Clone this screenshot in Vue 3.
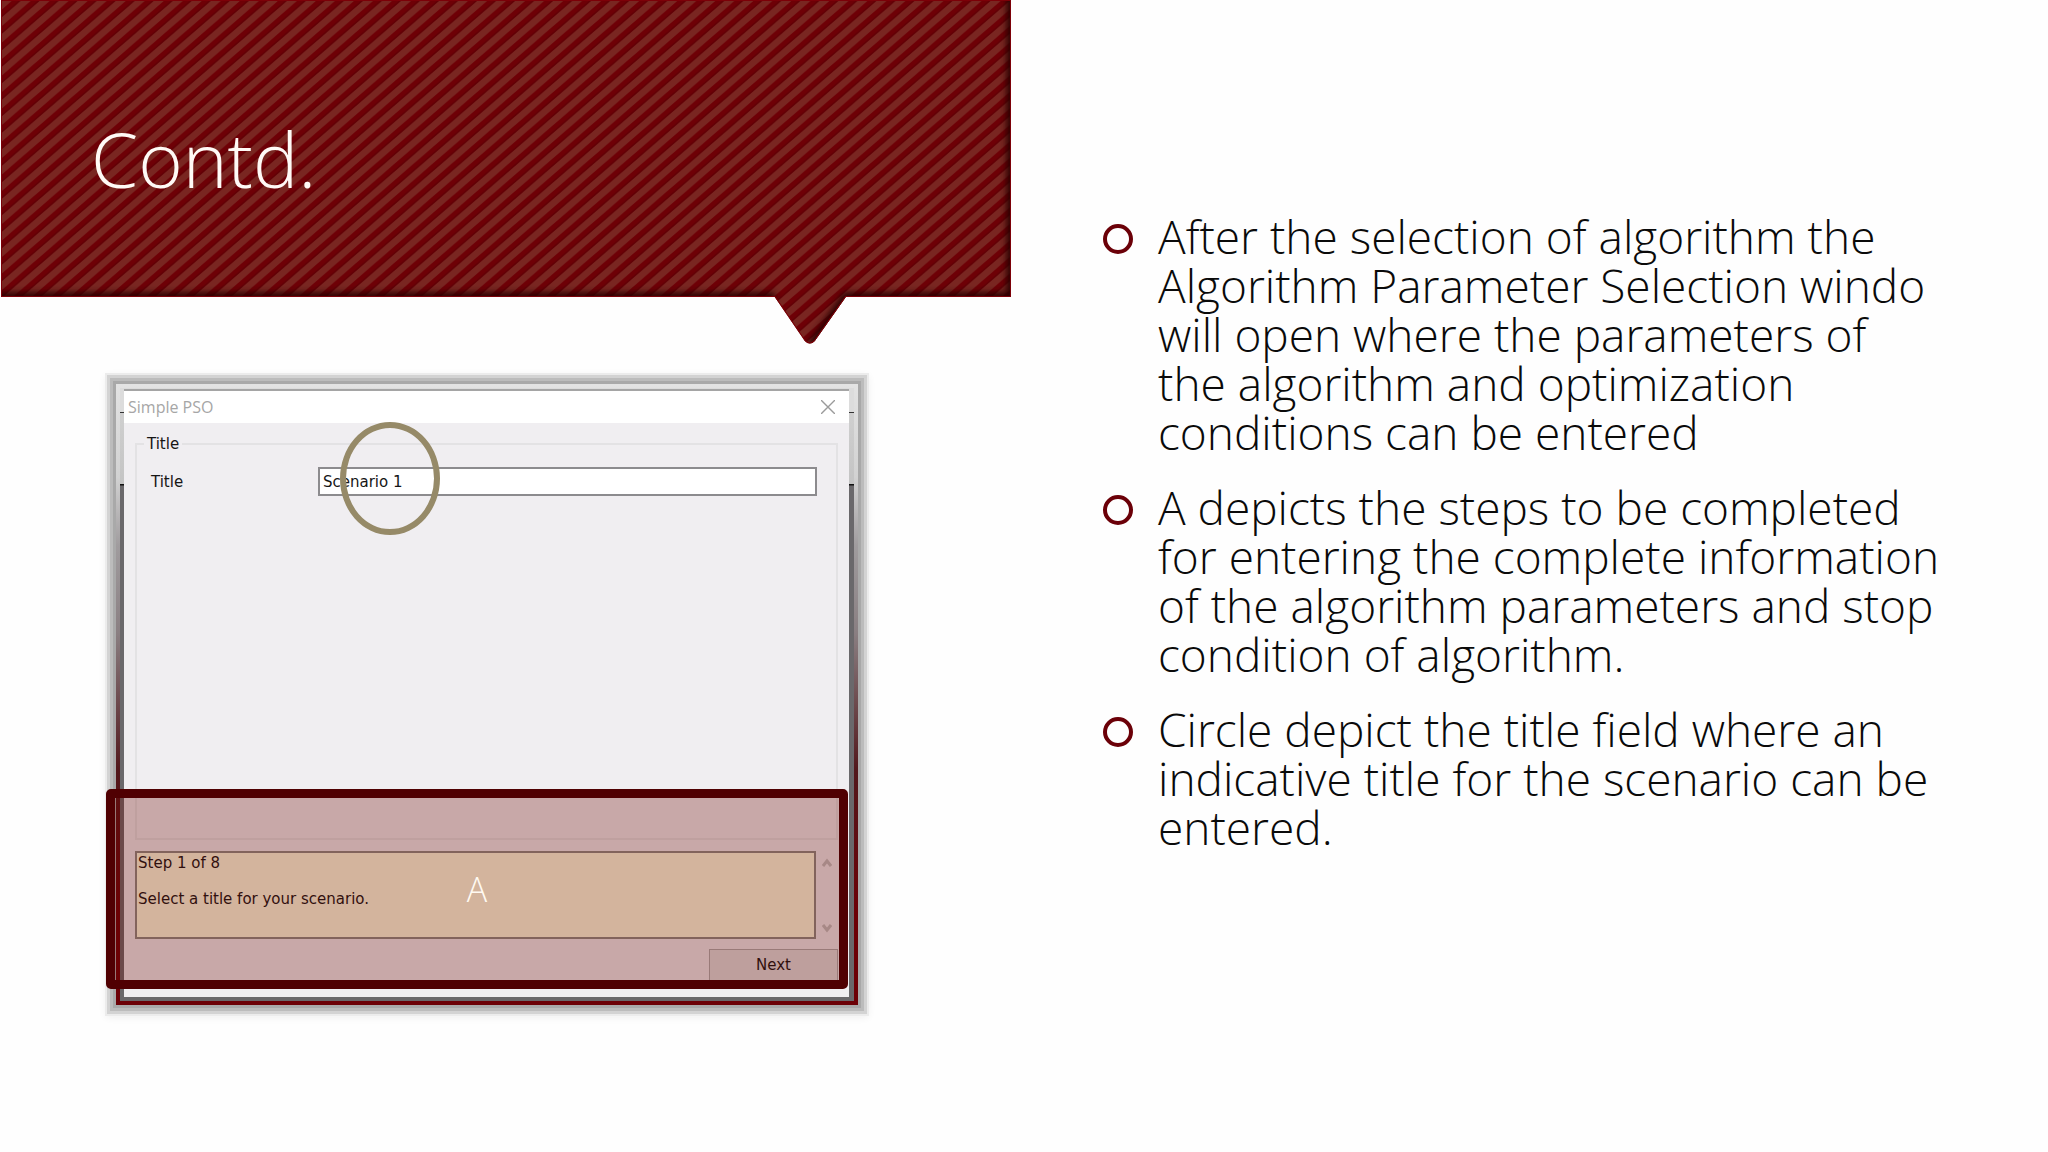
<script setup>
import { ref } from 'vue'

const title = ref('Scenario 1')
const steps = 'Step 1 of 8\n\nSelect a title for your scenario.'

const points = [
  [
    'After the selection of algorithm the',
    'Algorithm Parameter Selection windo',
    'will open where the parameters of',
    'the algorithm and optimization',
    'conditions can be entered',
  ],
  [
    'A depicts the steps to be completed',
    'for entering the complete information',
    'of the algorithm parameters and stop',
    'condition of algorithm.',
  ],
  [
    'Circle depict the title field where an',
    'indicative title for the scenario can be',
    'entered.',
  ],
]
</script>

<template>
  <main class="slide">
    <section class="left">
      <header class="banner">
        <svg class="banner-art" viewBox="0 0 1010 346" preserveAspectRatio="none" aria-hidden="true">
          <defs>
            <pattern id="stripes" width="38" height="33" patternUnits="userSpaceOnUse">
              <rect width="38" height="33" fill="#6e0006" />
              <g fill="none" stroke-linecap="square">
                <path d="M-19 22L19 -11M-19 38.5L38 -11M-19 55L57 -11M0 55L57 5.5M19 55L57 22" stroke="#792621" stroke-width="7" />
                <path d="M-19 17L19 -16M-19 33.5L38 -16M-19 50L57 -16M0 50L57 .5M19 50L57 17" stroke="#620005" stroke-width="1.6" />
              </g>
            </pattern>
            <clipPath id="bubble">
              <path d="M0 0H1009V297H844L813 341Q808 346 803 341L773 297H0Z" />
            </clipPath>
            <filter id="soft" x="-5%" y="-5%" width="110%" height="110%">
              <feGaussianBlur stdDeviation="3" />
            </filter>
          </defs>
          <g clip-path="url(#bubble)">
            <rect width="1010" height="346" fill="url(#stripes)" />
            <path d="M1009 -20V297H844L810 345M773 297H-20" fill="none" stroke="#2c0203" stroke-width="9" filter="url(#soft)" />
            <path d="M0 0H1009V297H844L813 341Q808 346 803 341L773 297H0Z" fill="none" stroke="#7c0008" stroke-width="2" />
          </g>
        </svg>
        <h1>Contd.</h1>
      </header>

      <figure class="shot">
        <form class="window" @submit.prevent>
          <div class="titlebar">
            <span>Simple PSO</span>
            <button type="button" class="close" aria-label="Close">
              <svg viewBox="0 0 14 14" width="14" height="14"><path d="M0 0L14 14M14 0L0 14" stroke="#9b9b9b" stroke-width="1.4" /></svg>
            </button>
          </div>
          <div class="body">
            <fieldset>
              <legend>Title</legend>
              <div class="field">
                <label for="scenario">Title</label>
                <input id="scenario" v-model="title" type="text" />
              </div>
            </fieldset>
            <div class="steps">
              <textarea aria-label="Steps" readonly :value="steps"></textarea>
              <div class="scroll">
                <svg viewBox="0 0 10 10" width="10" height="10"><path d="M1 8L5 3L9 8" fill="none" stroke="#c0c0c0" stroke-width="3" /></svg>
                <svg viewBox="0 0 10 10" width="10" height="10"><path d="M1 2L5 7L9 2" fill="none" stroke="#c0c0c0" stroke-width="3" /></svg>
              </div>
            </div>
            <button type="button" class="next">Next</button>
          </div>
        </form>
        <div class="ring"></div>
        <div class="callout">A</div>
      </figure>
    </section>

    <ul class="points">
      <li v-for="(lines, i) in points" :key="i">
        <p><span v-for="line in lines" :key="line">{{ line }} </span></p>
      </li>
    </ul>
  </main>
</template>

<style>
body {
  margin: 0;
  background: #fefefe;
}
</style>

<style scoped>
.slide {
  display: grid;
  grid-template-columns: 1012fr 1036fr;
  min-height: 100vh;
  font-family: "Open Sans", "Noto Sans", sans-serif;
  font-weight: 300;
  color: #0a0a0a;
}

.banner {
  position: relative;
  box-sizing: border-box;
  height: 297px;
  margin: 0 0 87px 1px;
  padding: 111px 90px 0;
}

.banner-art {
  position: absolute;
  top: 0;
  left: 0;
  width: 100%;
  height: 346px;
}

h1 {
  position: relative;
  margin: 0;
  font-size: 76px;
  line-height: 96px;
  font-weight: 300;
  color: #fffaf6;
}

.shot {
  position: relative;
  box-sizing: border-box;
  margin: 0 154px 0 116px;
  padding: 1px 5px 4px 4px;
  border: 4px solid;
  border-image: linear-gradient(#e3e3e3, #d2d2d2 15%, #a09c9e 26%, #8a7f82 40%, #52181c 62%, #6c0006 85%) 4;
  background: linear-gradient(#dcdcdc 0, #dcdcdc 24px, #333 24px, #333 25px, #cfcfcf 25px, #c4c4c4 96px, #111 96px, #111 97px, #6a686b 98px, #6a686b);
  box-shadow: 0 0 0 3px #a9a9a9, 0 0 0 6px #bcbcbc, 0 0 0 9px #d3d3d3, 0 0 0 11px #ececec, 0 2px 8px 10px #eee;
}

.window {
  border-top: 2px solid #a5a5a5;
  background: #f0eef1;
  font-family: "DejaVu Sans", Verdana, sans-serif;
  font-size: 15px;
  font-weight: 400;
  line-height: 18px;
  color: #151515;
}

.titlebar {
  display: flex;
  justify-content: space-between;
  align-items: center;
  height: 32px;
  padding: 0 14px 0 4px;
  background: #fff;
  font-family: "Open Sans", sans-serif;
  font-size: 16px;
  color: #a6a6a6;
}

.close {
  display: flex;
  padding: 0;
  border: 0;
  background: none;
}

.body {
  display: flex;
  flex-direction: column;
  padding: 12px 11px 16px;
}

fieldset {
  box-sizing: border-box;
  min-width: 0;
  height: 405px;
  margin: 0 0 11px;
  padding: 14px 19px 0 14px;
  border: 2px solid #e3e2e4;
}

legend {
  margin-left: -7px;
  padding: 0 3px;
}

.field {
  display: flex;
  align-items: center;
}

.field label {
  width: 167px;
}

.field input {
  box-sizing: border-box;
  flex: 1;
  min-width: 0;
  height: 29px;
  padding: 0 3px;
  border: 2px solid #8c8b8e;
  background: #fff;
  font: inherit;
  color: inherit;
}

.steps {
  display: flex;
  margin-bottom: 10px;
}

textarea {
  box-sizing: border-box;
  flex: 1;
  height: 88px;
  padding: 1px;
  border: 2px solid #8c8b84;
  background: #ffffe1;
  font: inherit;
  color: inherit;
  resize: none;
  overflow: hidden;
}

.scroll {
  display: flex;
  flex-direction: column;
  justify-content: space-between;
  padding: 7px 6px 6px;
}

.next {
  align-self: flex-end;
  width: 129px;
  height: 32px;
  padding: 0;
  border: 1px solid #adadad;
  background: #e1e1e1;
  font: inherit;
  color: inherit;
}

.ring {
  position: absolute;
  top: 34px;
  left: 220px;
  box-sizing: border-box;
  width: 100px;
  height: 113px;
  border: 6px solid #968a68;
  border-radius: 50%;
}

.callout {
  position: absolute;
  top: 401px;
  right: 6px;
  bottom: 12px;
  left: -14px;
  display: flex;
  align-items: center;
  justify-content: center;
  border: 9px solid #500002;
  border-radius: 5px;
  background: rgba(110, 6, 0, 0.3);
  font-size: 34px;
  line-height: 48px;
  color: #fffaf2;
}

.points {
  display: flex;
  flex-direction: column;
  gap: 26px;
  margin: 0;
  padding: 212px 90px 0 91px;
  list-style: none;
  font-size: 46px;
  line-height: 49px;
}

.points li {
  display: flex;
  gap: 25px;
}

.points li::before {
  content: "";
  box-sizing: border-box;
  flex: none;
  width: 30px;
  height: 30px;
  margin-top: 12px;
  border: 4px solid #6b0008;
  border-radius: 50%;
}

.points p {
  margin: 0;
}

.points span {
  display: block;
  white-space: nowrap;
}
</style>
